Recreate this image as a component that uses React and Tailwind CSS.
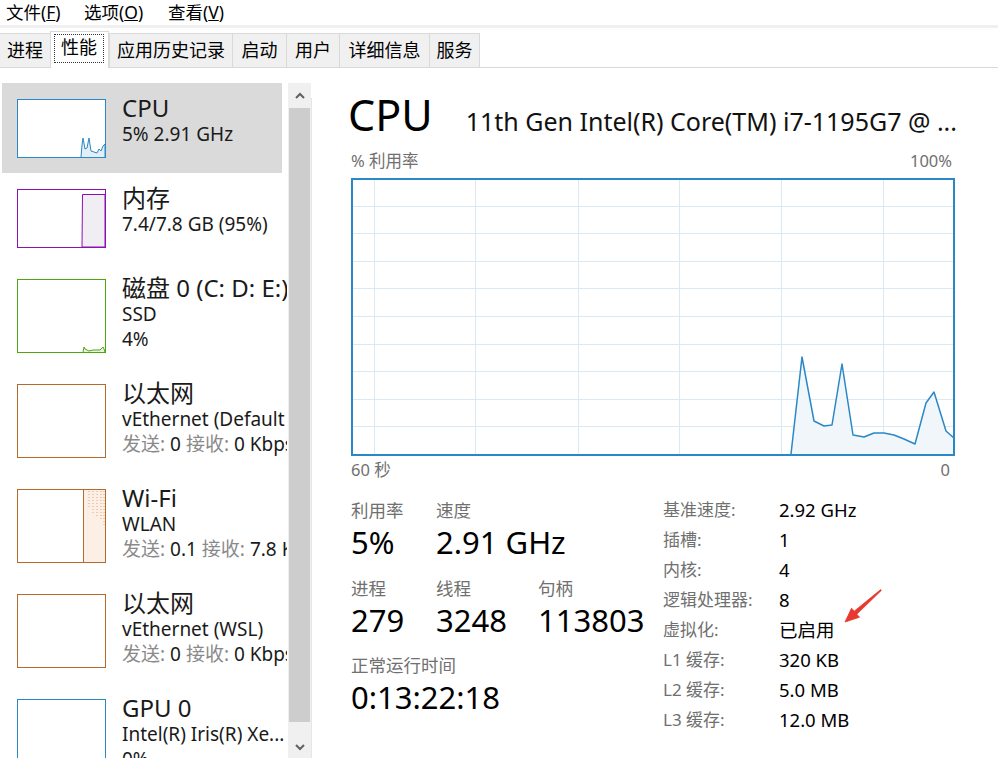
import React from 'react'

const TABS = [
  { name: '进程', w: 'w-[50px]' },
  { name: '性能', w: 'w-[59px]', active: true },
  { name: '应用历史记录', w: 'w-[123px]' },
  { name: '启动', w: 'w-[54px]' },
  { name: '用户', w: 'w-[53px]' },
  { name: '详细信息', w: 'w-[90px]' },
  { name: '服务', w: 'w-[51px]' },
]

const CHART = [
  [440, 276], [451, 179], [463, 243], [473, 248], [481, 247], [491, 186], [502, 257],
  [513, 259], [523, 255], [533, 255], [543, 257], [553, 261], [564, 266], [575, 225],
  [583, 214], [595, 253], [604, 261],
]

function Thumb({ kind, h }) {
  const c = {
    cpu: '#2a88c6', gpu: '#2a88c6', mem: '#8b12ae', disk: '#4da60c', net: '#b5692b', wifi: '#b5692b',
  }[kind]
  return (
    <svg width="89" height={h} className="shrink-0 block">
      <rect x="0.5" y="0.5" width="88" height={h - 1} fill="#fff" stroke={c} />
      {kind === 'cpu' && (
        <polyline
          points="64,58 65,46 66,39 68,50 70,49 72,39 74,52 77,53 80,54 82,50 84,52 86,47 88,45 88,58"
          fill="#e3eef7" stroke={c} strokeWidth="1"
        />
      )}
      {kind === 'mem' && (
        <polygon points="65,58 65.5,5.5 88,5.5 88,58" fill="#f1eef3" stroke={c} strokeWidth="1" />
      )}
      {kind === 'disk' && (
        <polyline
          points="66,73 67,68 68,70 70,71 72,72 76,71 80,71 83,71 86,68 87,70 88,73"
          fill="#e8f4df" stroke={c} strokeWidth="1"
        />
      )}
      {kind === 'wifi' && (
        <g>
          <rect x="66.5" y="1" width="21.5" height={h - 2} fill="#fcefe6" />
          <line x1="66.5" y1="1" x2="66.5" y2={h - 1} stroke={c} />
          {[72, 76, 80, 84, 87].map((x, i) => (
            <line key={x} x1={x} y1="2" x2={x} y2={20 + i * 4} stroke="#e2a37b" strokeDasharray="1 2" />
          ))}
        </g>
      )}
    </svg>
  )
}

function Net({ send, recv }) {
  return (
    <>
      <span className="text-[#8a8a8a]">发送:</span> {send} <span className="text-[#8a8a8a]">接收:</span> {recv}
    </>
  )
}

const ITEMS = [
  { title: 'CPU', lines: ['5% 2.91 GHz'], kind: 'cpu', h: 59, active: true },
  { title: '内存', lines: ['7.4/7.8 GB (95%)'], kind: 'mem', h: 59 },
  { title: '磁盘 0 (C: D: E:)', lines: ['SSD', '4%'], kind: 'disk', h: 74 },
  { title: '以太网', lines: ['vEthernet (Default ...', <Net send="0" recv="0 Kbps" />], kind: 'net', h: 74 },
  { title: 'Wi-Fi', lines: ['WLAN', <Net send="0.1" recv="7.8 Kbps" />], kind: 'wifi', h: 74 },
  { title: '以太网', lines: ['vEthernet (WSL)', <Net send="0" recv="0 Kbps" />], kind: 'net', h: 74 },
  { title: 'GPU 0', lines: ['Intel(R) Iris(R) Xe...', '0%'], kind: 'gpu', h: 74 },
]

function SideItem({ item }) {
  return (
    <div className={`ml-[2px] w-[280px] flex pl-[15px] pt-[11px] pb-[15px] ${item.active ? 'bg-[#dadada]' : ''}`}>
      <div className="mt-[5px]">
        <Thumb kind={item.kind} h={item.h} />
      </div>
      <div className="ml-[16px] whitespace-nowrap text-[#1a1a1a]">
        <div className="text-[24px] h-[28px] leading-[28px]">{item.title}</div>
        {item.lines.map((l, i) => (
          <div key={i} className="text-[19px] h-[25px] leading-[25px]">{l}</div>
        ))}
      </div>
    </div>
  )
}

function Stat({ label, value, w }) {
  return (
    <div className={w}>
      <div className="text-[17.5px] h-[28px] leading-[28px] text-[#707070]">{label}</div>
      <div className="text-[31px] h-[36px] leading-[36px] text-black">{value}</div>
    </div>
  )
}

const SPECS = [
  ['基准速度:', '2.92 GHz'],
  ['插槽:', '1'],
  ['内核:', '4'],
  ['逻辑处理器:', '8'],
  ['虚拟化:', '已启用'],
  ['L1 缓存:', '320 KB'],
  ['L2 缓存:', '5.0 MB'],
  ['L3 缓存:', '12.0 MB'],
]

function Chart() {
  const W = 604
  const H = 278
  const vx = [23, 124, 227, 328, 430, 532]
  const hy = [1, 2, 3, 4, 5, 6, 7, 8, 9].map(k => Math.round(k * 27.6))
  const pts = CHART.map(p => p.join(',')).join(' ')
  return (
    <svg width={W} height={H} className="block">
      <rect x="0" y="0" width={W} height={H} fill="#fff" />
      {vx.map(x => (
        <line key={x} x1={x + 0.5} y1="0" x2={x + 0.5} y2={H} stroke="#d9eaf4" />
      ))}
      {hy.map(y => (
        <line key={y} x1="0" y1={y + 0.5} x2={W} y2={y + 0.5} stroke="#d9eaf4" />
      ))}
      <polygon points={`${pts} 604,277 440,277`} fill="#f1f6fa" />
      <polyline points={pts} fill="none" stroke="#2a88c6" strokeWidth="1.5" strokeLinejoin="round" />
      <rect x="1" y="1" width={W - 2} height={H - 2} fill="none" stroke="#2a88c6" strokeWidth="2" />
    </svg>
  )
}

export default function App() {
  return (
    <div className="w-[998px] h-[758px] bg-white overflow-hidden relative font-['Noto_Sans','Noto_Sans_CJK_SC',sans-serif] text-black">
      {/* menu */}
      <div className="h-[25px] flex items-center text-[17.5px] leading-[25px]">
        <span className="ml-[6px] w-[78px]">文件(<u>F</u>)</span>
        <span className="w-[84px]">选项(<u>O</u>)</span>
        <span>查看(<u>V</u>)</span>
      </div>
      <div className="h-[3px] bg-[#f0f0f0]" />

      {/* tabs */}
      <div className="h-[40px] flex items-end border-b border-[#d9d9d9]">
        {TABS.map((t, i) =>
          t.active ? (
            <div key={t.name} className={`${t.w} h-[37px] -mb-px bg-white border-x border-t border-[#d9d9d9] pt-[2px] pb-[5px] pl-[3px] pr-[4px] relative z-10`}>
              <div className="h-full border border-dotted border-[#333] flex items-center justify-center text-[18px] pb-[3px]">
                {t.name}
              </div>
            </div>
          ) : (
            <div
              key={t.name}
              className={`${t.w} h-[34px] bg-[#f0f0f0] border-t border-[#d9d9d9] ${i === 0 ? '' : 'border-l'} ${i === TABS.length - 1 ? 'border-r' : ''} flex items-center justify-center text-[18px]`}
            >
              {t.name}
            </div>
          )
        )}
      </div>

      {/* body */}
      <div className="flex">
        <div className="flex pt-[15px] h-[690px]">
          <div className="w-[287px] overflow-hidden">
            {ITEMS.map((it, i) => (
              <SideItem key={i} item={it} />
            ))}
          </div>
          <div className="ml-px w-[23px] bg-[#f0f0f0] flex flex-col">
            <div className="h-[25px] flex items-center justify-center">
              <svg width="10" height="7" viewBox="0 0 10 7">
                <polyline points="1,6 5,2 9,6" fill="none" stroke="#606060" strokeWidth="2" />
              </svg>
            </div>
            <div className="mx-px h-[614px] bg-[#cdcdcd]" />
            <div className="flex-1 flex items-end justify-center pb-[7px]">
              <svg width="10" height="7" viewBox="0 0 10 7">
                <polyline points="1,1 5,5 9,1" fill="none" stroke="#606060" strokeWidth="2" />
              </svg>
            </div>
          </div>
          <div className="w-px bg-[#e6e6e6] mt-[15px]" />
        </div>

        {/* right panel */}
        <div className="ml-[36px] pt-[23px] w-[606px]">
          <div className="h-[48px] flex items-baseline whitespace-nowrap">
            <span className="text-[43px] leading-[48px]">CPU</span>
            <span className="ml-[33px] text-[25px] text-[#111]">11th Gen Intel(R) Core(TM) i7-1195G7 @ ...</span>
          </div>
          <div className="mt-[12px] h-[20px] flex justify-between text-[16.5px] leading-[20px] text-[#707070] pl-[3px] pr-[2px]">
            <span>% 利用率</span>
            <span>100%</span>
          </div>
          <div className="mt-[7px] ml-[3px]">
            <Chart />
          </div>
          <div className="mt-[4px] h-[20px] flex justify-between text-[16.5px] leading-[20px] text-[#707070] pl-[3px] pr-[4px]">
            <span>60 秒</span>
            <span>0</span>
          </div>

          <div className="mt-[16px] flex pl-[3px]">
            <div className="w-[312px] whitespace-nowrap">
              <div className="flex">
                <Stat label="利用率" value="5%" w="w-[85px]" />
                <Stat label="速度" value="2.91 GHz" />
              </div>
              <div className="flex mt-[14px]">
                <Stat label="进程" value="279" w="w-[85px]" />
                <Stat label="线程" value="3248" w="w-[102px]" />
                <Stat label="句柄" value="113803" />
              </div>
              <div className="mt-[13px]">
                <Stat label="正常运行时间" value="0:13:22:18" />
              </div>
            </div>
            <div className="-mt-px grid grid-cols-[116px_auto] auto-rows-[30px] leading-[30px] whitespace-nowrap">
              {SPECS.map(([k, v]) => (
                <React.Fragment key={k}>
                  <div className="text-[17px] h-[30px] text-[#707070]">{k}</div>
                  <div className="text-[18.5px] h-[30px] text-black">{v}</div>
                </React.Fragment>
              ))}
            </div>
          </div>
        </div>
      </div>

      {/* annotation arrow */}
      <svg className="absolute left-[840px] top-[588px]" width="46" height="40" viewBox="0 0 46 40">
        <polygon
          points="41.3,2.4 16.8,26.2 19.5,29.2 5,34 11.5,20.2 14.2,23.2 40.7,1.6"
          fill="#e8392f"
          stroke="#e8392f"
          strokeWidth="0.8"
          strokeLinejoin="round"
        />
      </svg>
    </div>
  )
}
